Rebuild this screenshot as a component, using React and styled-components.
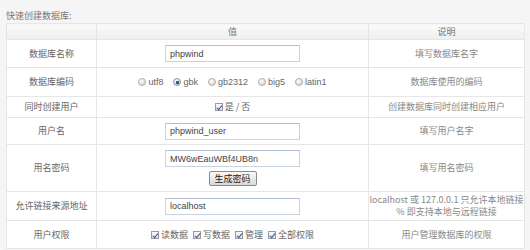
import React from 'react';
import styled, { createGlobalStyle } from 'styled-components';

const GlobalStyle = createGlobalStyle`
  html, body {
    margin: 0;
    background: #f5f5f5;
  }
  body {
    padding: 9px 6px 0 6px;
    font-family: "Noto Sans CJK SC", "Liberation Sans", sans-serif;
    font-size: 9px;
    color: #666;
  }
`;

const Title = styled.div`
  height: 14px;
  line-height: 13px;
  color: #777;
`;

const Table = styled.table`
  width: 518px;
  border-collapse: collapse;
  background: #fff;
  table-layout: fixed;
`;

const HeadCell = styled.th`
  height: 15px;
  padding: 0;
  border: 1px solid #e6e6e6;
  background: linear-gradient(#fbfbfb, #eeeeee);
  font-weight: normal;
  color: #777;
  text-align: center;
  line-height: 15px;
`;

const Row = styled.tr`
  height: ${p => p.$h}px;
`;

const Cell = styled.td`
  padding: 0;
  border: 1px solid #e6e6e6;
  text-align: center;
  vertical-align: middle;
  line-height: 12px;
  color: ${p => (p.$desc ? '#888' : '#666')};
`;

const TextInput = styled.input`
  box-sizing: border-box;
  width: 135px;
  height: 17px;
  padding: 0 4px;
  border: 1px solid #c8d3e0;
  border-top-color: #b3c0d0;
  background: #fff;
  font-family: "Liberation Sans", Arial, sans-serif;
  font-size: 9px;
  color: #444;
  outline: none;
  display: block;
  margin: 0 auto;
`;

const Options = styled.div`
  display: flex;
  justify-content: center;
  align-items: center;
  gap: ${p => p.$gap || 6}px;
`;

const Option = styled.label`
  display: inline-flex;
  align-items: center;
  gap: 2px;
  font-family: ${p => (p.$latin ? '"Liberation Sans", Arial, sans-serif' : 'inherit')};
  color: #666;
`;

const Radio = styled.input.attrs({ type: 'radio' })`
  appearance: none;
  margin: 0;
  width: 8px;
  height: 8px;
  border-radius: 50%;
  border: 1px solid #b0b0b0;
  background: radial-gradient(circle at 40% 35%, #ffffff, #cccccc);
  position: relative;
  &:checked {
    border-color: #8a9bb0;
  }
  &:checked::after {
    content: '';
    position: absolute;
    left: 1.5px;
    top: 1.5px;
    width: 3px;
    height: 3px;
    border-radius: 50%;
    background: #1f4d7a;
    box-shadow: 0 0 1px #2e6aa5;
  }
`;

const Check = styled.input.attrs({ type: 'checkbox' })`
  appearance: none;
  margin: 0;
  width: 8px;
  height: 8px;
  border: 1px solid #9a9a9a;
  background: linear-gradient(#fdfdfd, #dcdcdc);
  position: relative;
  &:checked::after {
    content: '';
    position: absolute;
    left: 2px;
    top: 0px;
    width: 2px;
    height: 5px;
    border: solid #2a5fb0;
    border-width: 0 1.5px 1.5px 0;
    transform: rotate(40deg);
  }
`;

const Stack = styled.div`
  display: flex;
  flex-direction: column;
  align-items: center;
  gap: 4px;
`;

const Button = styled.button`
  width: 48px;
  height: 15px;
  padding: 0;
  border: 1px solid #8a8a8a;
  border-radius: 2px;
  background: linear-gradient(#fafafa, #d8d8d8);
  font-family: "Noto Sans CJK SC", sans-serif;
  font-size: 9px;
  color: #222;
  line-height: 13px;
`;

const encodings = ['utf8', 'gbk', 'gb2312', 'big5', 'latin1'];
const perms = ['读数据', '写数据', '管理', '全部权限'];

export default function App() {
  return (
    <>
      <GlobalStyle />
      <Title>快速创建数据库:</Title>
      <Table>
        <colgroup>
          <col style={{ width: 90 }} />
          <col style={{ width: 272 }} />
          <col style={{ width: 156 }} />
        </colgroup>
        <thead>
          <tr>
            <HeadCell />
            <HeadCell>值</HeadCell>
            <HeadCell>说明</HeadCell>
          </tr>
        </thead>
        <tbody>
          <Row $h={28}>
            <Cell>数据库名称</Cell>
            <Cell><TextInput defaultValue="phpwind" /></Cell>
            <Cell $desc>填写数据库名字</Cell>
          </Row>
          <Row $h={29}>
            <Cell>数据库编码</Cell>
            <Cell>
              <Options $gap={10}>
                {encodings.map(e => (
                  <Option key={e} $latin>
                    <Radio name="enc" defaultChecked={e === 'gbk'} />
                    {e}
                  </Option>
                ))}
              </Options>
            </Cell>
            <Cell $desc>数据库使用的编码</Cell>
          </Row>
          <Row $h={21}>
            <Cell>同时创建用户</Cell>
            <Cell>
              <Options>
                <Option>
                  <Check defaultChecked />
                  是 / 否
                </Option>
              </Options>
            </Cell>
            <Cell $desc>创建数据库同时创建相应用户</Cell>
          </Row>
          <Row $h={27}>
            <Cell>用户名</Cell>
            <Cell><TextInput defaultValue="phpwind_user" /></Cell>
            <Cell $desc>填写用户名字</Cell>
          </Row>
          <Row $h={47}>
            <Cell>用名密码</Cell>
            <Cell>
              <Stack>
                <TextInput defaultValue="MW6wEauWBf4UB8n" />
                <Button>生成密码</Button>
              </Stack>
            </Cell>
            <Cell $desc>填写用名密码</Cell>
          </Row>
          <Row $h={29}>
            <Cell>允许链接来源地址</Cell>
            <Cell><TextInput defaultValue="localhost" /></Cell>
            <Cell $desc>
              localhost 或 127.0.0.1 只允许本地链接
              <br />% 即支持本地与远程链接
            </Cell>
          </Row>
          <Row $h={28}>
            <Cell>用户权限</Cell>
            <Cell>
              <Options $gap={5}>
                {perms.map(p => (
                  <Option key={p}>
                    <Check defaultChecked />
                    {p}
                  </Option>
                ))}
              </Options>
            </Cell>
            <Cell $desc>用户管理数据库的权限</Cell>
          </Row>
        </tbody>
      </Table>
    </>
  );
}
